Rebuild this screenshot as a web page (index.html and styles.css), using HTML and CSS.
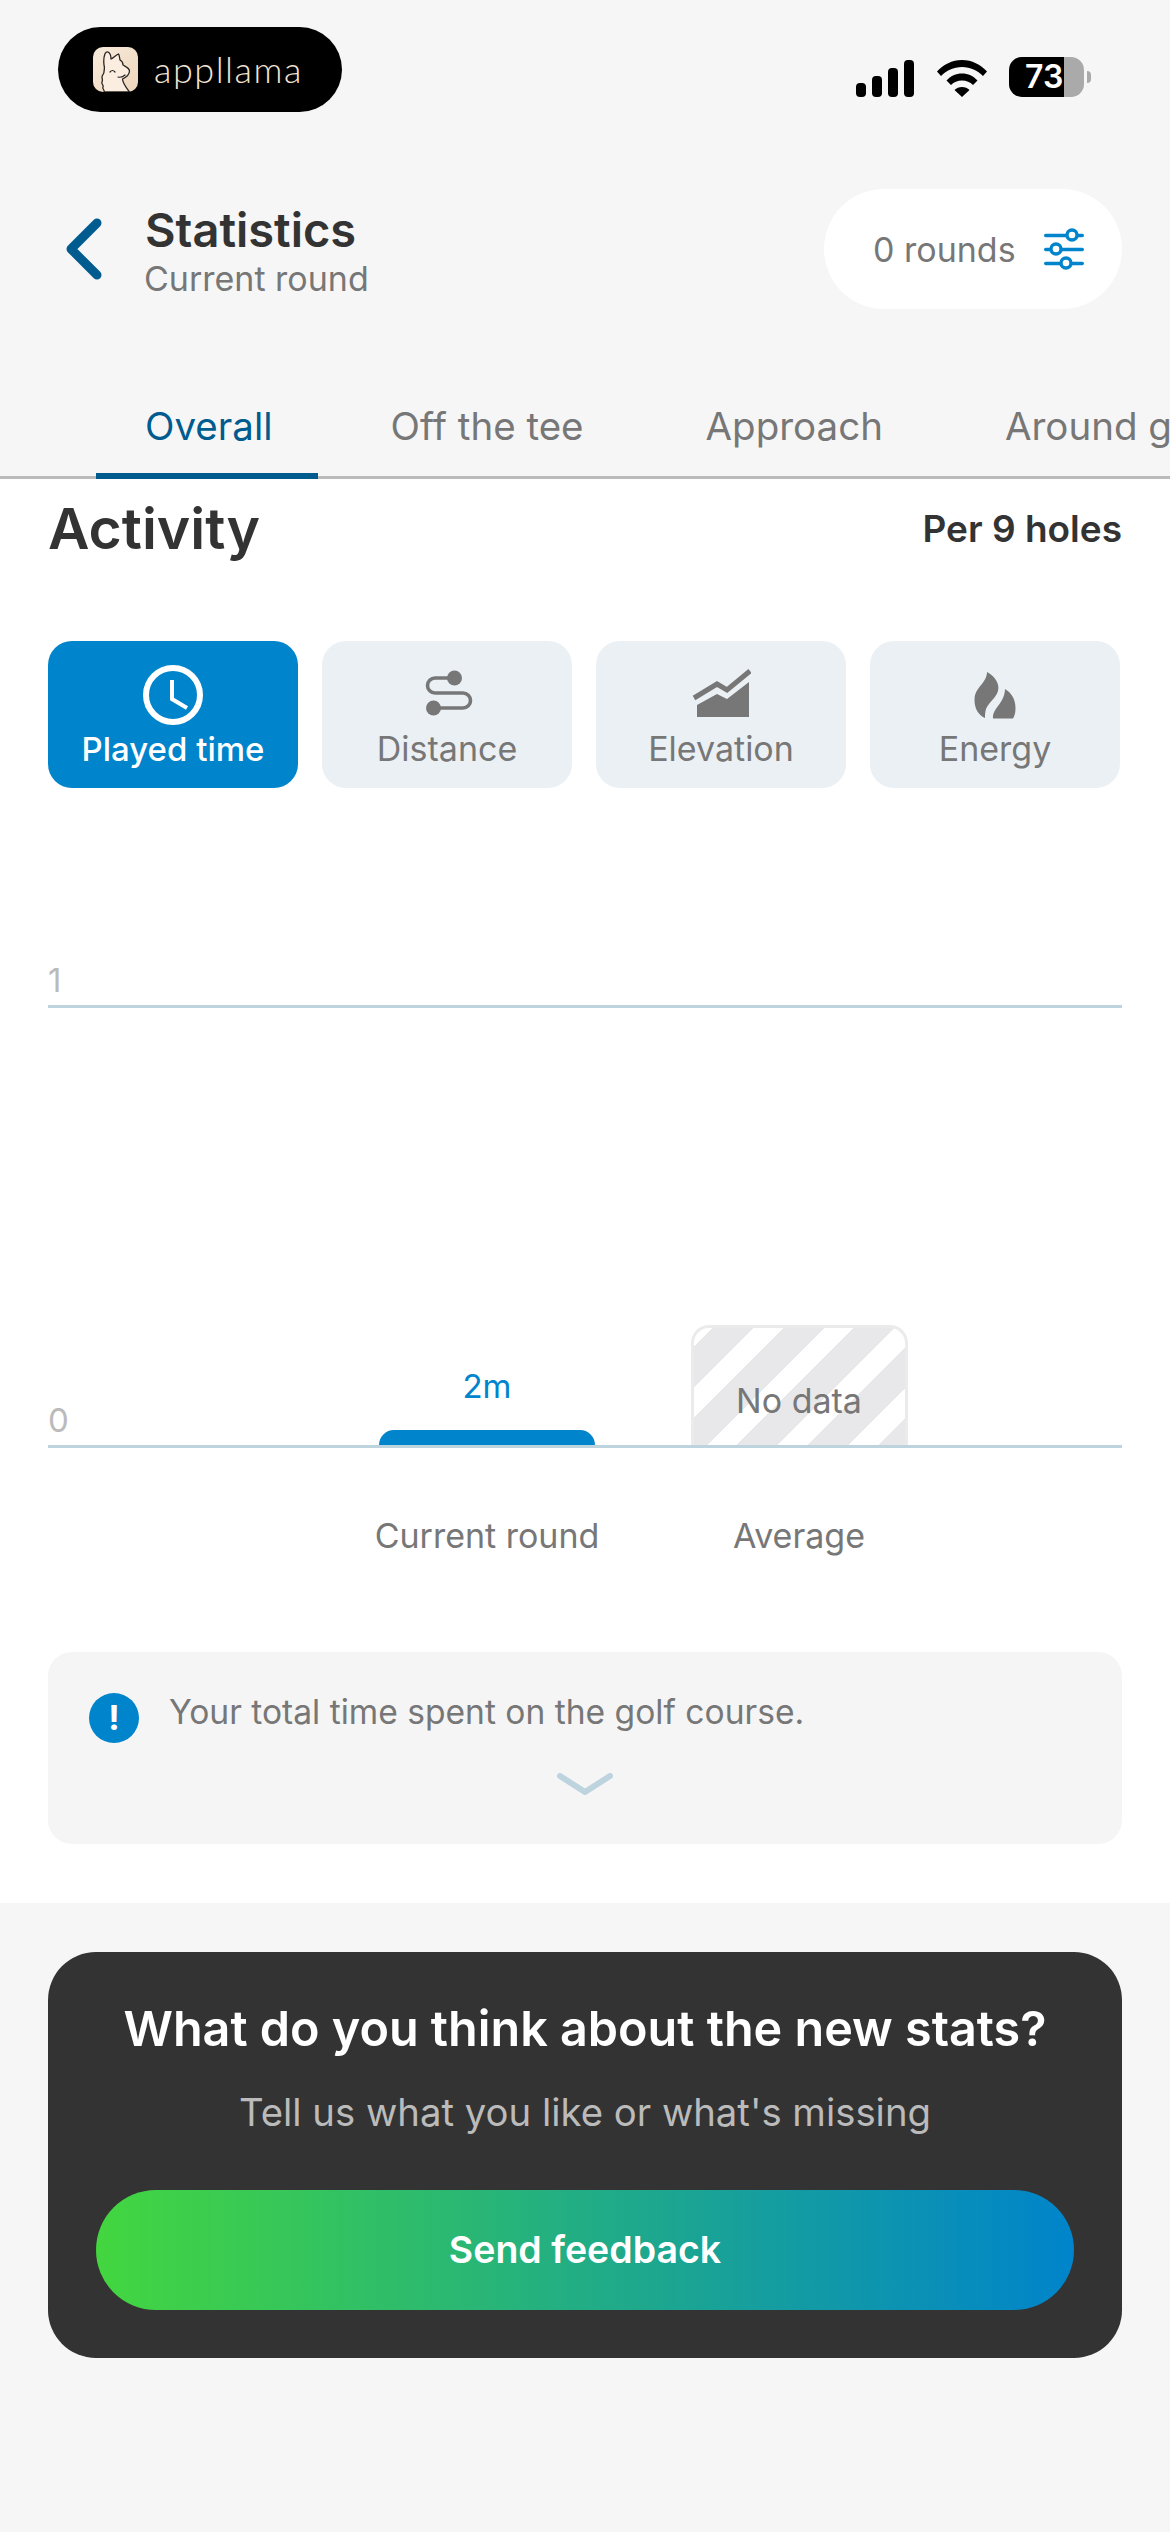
FILE: index.html
```html
<!DOCTYPE html>
<html lang="en">
<head>
<meta charset="utf-8">
<title>Statistics</title>
<link rel="stylesheet" href="styles.css">
</head>
<body>
<div class="status">
  <div class="brand">
    <svg class="llama" viewBox="0 0 45 45">
      <defs><linearGradient id="lg" x1="0" y1="0" x2="1" y2="1"><stop offset="0" stop-color="#f8ebdc"/><stop offset="1" stop-color="#eed6bb"/></linearGradient></defs>
      <rect width="45" height="45" rx="10" fill="url(#lg)"/>
      <path d="M11 45c1-2-2-3-1-5s-2-3-1-5 0-3 0-5 2-3 2-5 1-4 0-7C10 9 12.500 4 15 5c2 1 3 4 3 7 2-1 5-4 7.500-5 1 1 1 4 1.500 6 2 1 3 3 3 5 3 2 6.500 3 6.500 6 0 4-3 6-7 8 0 4 4 9 7 13z" fill="#fbeee0" stroke="#2a2522" stroke-width="1.300" stroke-linejoin="round"/>
      <path d="M17 25q2.500-3 5 0M25 30q4 1 7-2" fill="none" stroke="#2a2522" stroke-width="1.200" stroke-linecap="round"/>
    </svg>
    <span class="wordmark">appllama</span>
  </div>
  <div class="indicators">
    <div class="signal"><i class="b1"></i><i class="b2"></i><i class="b3"></i><i class="b4"></i></div>
    <svg class="wifi" viewBox="0 0 50 37"><path d="M0 11.500C6.500 4.500 15 0 25 0s18.500 4.500 25 11.500l-4 4.500C40.500 10.500 33.500 7 25 7S9.500 10.500 4 16z"/><path d="M9.500 20.500C13.500 16 19 13.500 25 13.500s11.500 2.500 15.500 7l-4.500 4.500C33 22 29.500 20.500 25 20.500S17 22 14 25z"/><path d="M25 27c-3 0-5.500 1-7.500 3L25 37l7.500-7c-2-2-4.500-3-7.500-3z"/></svg>
    <div class="battery"><span class="level">73</span></div>
    <div class="nub"></div>
  </div>
</div>

<header class="header">
  <svg class="back" viewBox="0 0 36 62"><path d="M31 5L5 31l26 26" fill="none" stroke="#005b8e" stroke-width="9" stroke-linecap="round" stroke-linejoin="round"/></svg>
  <div class="titles">
    <div class="title">Statistics</div>
    <div class="subtitle">Current round</div>
  </div>
  <div class="rounds">
    <span>0 rounds</span>
    <svg class="sliders" viewBox="0 0 40 42"><g fill="none" stroke="#0084cb" stroke-width="3.400" stroke-linecap="round"><path d="M1.700 7.500H22M34 7.500h4.300M1.700 21.500H6M18 21.500h20.300M1.700 35.500H16M28 35.500h10.300"/><circle cx="28" cy="7" r="5"/><circle cx="12" cy="21" r="5"/><circle cx="22" cy="35" r="5"/></g></svg>
  </div>
</header>

<nav class="tabs">
  <div class="tab active">Overall</div>
  <div class="tab">Off the tee</div>
  <div class="tab">Approach</div>
  <div class="tab">Around green</div>
</nav>

<main class="panel">
  <div class="panel-head">
    <h1>Activity</h1>
    <span class="per">Per 9 holes</span>
  </div>
  <div class="metrics">
    <div class="metric on">
      <svg viewBox="0 0 60 60"><circle cx="30" cy="30" r="27" fill="none" stroke="#fff" stroke-width="6"/><path d="M29 15v19l15 9" fill="none" stroke="#fff" stroke-width="4"/></svg>
      <span>Played time</span>
    </div>
    <div class="metric">
      <svg viewBox="0 0 60 60"><path d="M37 13H18a7.500 7.500 0 0 0 0 15h28a7.500 7.500 0 0 1 0 15H18" fill="none" stroke="#777" stroke-width="3.600"/><circle cx="37.500" cy="13" r="7.500" fill="#777"/><circle cx="16.500" cy="43" r="7.500" fill="#777"/></svg>
      <span>Distance</span>
    </div>
    <div class="metric">
      <svg viewBox="0 0 60 60"><path d="M3 33l23-14 10 6 23-19" fill="none" stroke="#777" stroke-width="5"/><path d="M6 40v12h52V17L36 34l-10-5z" fill="#777"/></svg>
      <span>Elevation</span>
    </div>
    <div class="metric">
      <svg viewBox="0 0 60 60"><path d="M22 7C30 11 35 19 33 26C31 33 24 37 21 44C20 47 20 50 20 53C13 50 9.500 43 9.500 35C9.500 26 15 22 19 16C21 13 22 10 22 7z" fill="#777"/><path d="M40 24C47 28 50.500 35 50.500 43C50.500 47 50 50 48 53.500H28C27.500 49 30 45 33 41C36 37 40 31 40 24z" fill="#777"/></svg>
      <span>Energy</span>
    </div>
  </div>

  <div class="chart">
    <div class="grid-top"><span class="axis">1</span></div>
    <div class="grid-bottom">
      <span class="axis">0</span>
      <div class="col">
        <span class="bar-value">2m</span>
        <div class="bar"></div>
      </div>
      <div class="col">
        <div class="nodata"><span>No data</span></div>
      </div>
    </div>
    <div class="x-labels">
      <span class="x-label">Current round</span>
      <span class="x-label">Average</span>
    </div>
  </div>

  <section class="info">
    <div class="info-row">
      <div class="info-icon">!</div>
      <p>Your total time spent on the golf course.</p>
    </div>
    <svg class="more" viewBox="0 0 56 22"><path d="M3 3l25 16L53 3" fill="none" stroke="#bdd3de" stroke-width="6" stroke-linecap="round" stroke-linejoin="round"/></svg>
  </section>
</main>

<section class="feedback">
  <h2>What do you think about the new stats?</h2>
  <p>Tell us what you like or what's missing</p>
  <div class="cta">Send feedback</div>
</section>
</body>
</html>
```
FILE: styles.css
```css
* { box-sizing: border-box; }
html, body { margin: 0; padding: 0; }
body {
  width: 1170px;
  height: 2532px;
  overflow: hidden;
  background: #f6f6f6;
  font-family: Inter, "Liberation Sans", sans-serif;
  color: #777;
}

/* status bar */
.status {
  height: 189px;
  padding: 27px 79px 0 58px;
  display: flex;
  justify-content: space-between;
  align-items: flex-start;
}
.brand {
  width: 284px;
  height: 85px;
  border-radius: 43px;
  background: #000;
  display: flex;
  align-items: center;
  gap: 16px;
  padding-left: 35px;
}
.llama { width: 45px; height: 45px; display: block; }
.wordmark {
  font-family: Lato, sans-serif;
  font-weight: 300;
  font-size: 36px;
  line-height: 45px;
  color: #f3e4d2;
  letter-spacing: 1.5px;
}
.indicators {
  display: flex;
  align-items: center;
  margin-top: 30px;
  height: 40px;
}
.signal { display: flex; align-items: flex-end; gap: 6px; height: 37px; margin-top: 2px; }
.signal i { width: 10px; background: #000; border-radius: 4px; display: block; }
.b1 { height: 14px; }
.b2 { height: 21px; }
.b3 { height: 29px; }
.b4 { height: 37px; }
.wifi { width: 50px; height: 37px; margin: 2px 22px 0 23px; fill: #000; display: block; }
.battery {
  width: 75px;
  height: 40px;
  border-radius: 13px;
  background: linear-gradient(90deg, #000 0, #000 55px, #aaa 55px);
  overflow: hidden;
}
.level {
  display: block;
  padding-left: 16px;
  font-size: 32px;
  line-height: 40px;
  font-weight: 600;
  color: #fff;
}
.nub { width: 4px; height: 12px; margin-left: 3px; background: #aaa; border-radius: 0 4px 4px 0; }

/* header */
.header {
  height: 120px;
  padding: 0 48px 0 66px;
  display: flex;
  align-items: center;
}
.back { width: 36px; height: 62px; display: block; margin-top: -1px; }
.titles { margin-left: 43px; margin-top: 7px; }
.title { font-size: 47px; line-height: 52px; font-weight: 600; color: #333; }
.subtitle { font-size: 34px; line-height: 46px; color: #777; margin-left: -1px; }
.rounds {
  margin-left: auto;
  width: 298px;
  height: 120px;
  border-radius: 60px;
  background: #fff;
  display: flex;
  align-items: center;
  gap: 28px;
  padding-left: 49px;
  font-size: 34px;
}
.sliders { width: 40px; height: 42px; display: block; }

/* tabs */
.tabs {
  height: 170px;
  padding: 0 0 0 96px;
  display: flex;
  align-items: flex-end;
  gap: 24px;
  box-shadow: inset 0 -3px 0 #bbb;
  overflow: hidden;
  white-space: nowrap;
}
.tab {
  padding: 0 49px;
  height: 73px;
  font-size: 38.5px;
  line-height: 40px;
  flex: none;
}
.tab.active { color: #005b8e; border-bottom: 6px solid #005b8e; padding-right: 45px; }

/* panel */
.panel {
  background: #fff;
  height: 1424px;
  padding: 0 48px;
}
.panel-head {
  height: 162px;
  display: flex;
  justify-content: space-between;
  padding-top: 15px;
}
h1 { margin: 0; font-size: 57px; line-height: 70px; font-weight: 600; color: #333; }
.per { font-size: 37px; line-height: 70px; font-weight: 600; color: #333; }
.metrics { display: flex; gap: 24px; }
.metric {
  width: 250px;
  height: 147px;
  border-radius: 24px;
  background: #ebf0f4;
  display: flex;
  flex-direction: column;
  align-items: center;
  padding-top: 24px;
  font-size: 34px;
  line-height: 44px;
  color: #777;
}
.metric svg { width: 60px; height: 60px; display: block; margin-bottom: 2px; }
.metric.on { background: #0084cb; color: #fff; font-weight: 500; font-size: 33px; }

/* chart */
.grid-top {
  height: 220px;
  border-bottom: 3px solid #bdd3de;
  display: flex;
  align-items: flex-end;
}
.grid-bottom {
  height: 440px;
  border-bottom: 3px solid #bdd3de;
  display: flex;
  align-items: flex-end;
  gap: 96px;
}
.axis { font-size: 33px; line-height: 44px; color: #bbb; width: 235px; padding-bottom: 3px; flex: none; }
.col { width: 216px; display: flex; flex-direction: column; align-items: center; flex: none; }
.bar-value { font-size: 33px; line-height: 40px; color: #0084cb; margin-bottom: 24px; }
.bar { width: 216px; height: 15px; background: #0084cb; border-radius: 15px 15px 0 0; }
.nodata {
  width: 217px;
  height: 120px;
  border: 3px solid #ebebeb;
  border-bottom: 0;
  border-radius: 18px 18px 0 0;
  background: repeating-linear-gradient(135deg, #fff 0, #fff 13px, #e8e8ea 13px, #e8e8ea 42px, #fff 42px, #fff 50px);
  display: flex;
  justify-content: center;
  padding-top: 53px;
  font-size: 34px;
  line-height: 40px;
}
.x-labels { display: flex; padding-left: 331px; gap: 96px; padding-top: 68px; }
.x-label { width: 216px; display: flex; justify-content: center; font-size: 34px; line-height: 40px; white-space: nowrap; flex: none; }

/* info */
.info {
  margin-top: 96px;
  height: 192px;
  border-radius: 24px;
  background: #f5f5f5;
  padding: 41px 41px 0;
}
.info-row { display: flex; gap: 30px; align-items: flex-start; }
.info-icon {
  width: 50px;
  height: 50px;
  border-radius: 50%;
  background: #0084cb;
  color: #fff;
  font-size: 34px;
  font-weight: 700;
  line-height: 50px;
  text-align: center;
  flex: none;
}
.info p { margin: 0; font-size: 33.6px; line-height: 38px; color: #777; }
.more { display: block; width: 56px; height: 22px; margin: 30px auto 0; }

/* feedback */
.feedback {
  margin: 49px 48px 0;
  height: 406px;
  border-radius: 48px;
  background: #333;
  text-align: center;
  padding: 49px 48px 0;
}
h2 { margin: 0; font-size: 48.5px; line-height: 56px; font-weight: 600; color: #fff; white-space: nowrap; }
.feedback p { margin: 33px 0 0; font-size: 38.3px; line-height: 44px; color: #bbb; }
.cta {
  margin-top: 56px;
  height: 120px;
  border-radius: 60px;
  background: linear-gradient(90deg, #43d63f, #0084cb);
  color: #fff;
  font-size: 37.5px;
  line-height: 120px;
  font-weight: 600;
}
```
